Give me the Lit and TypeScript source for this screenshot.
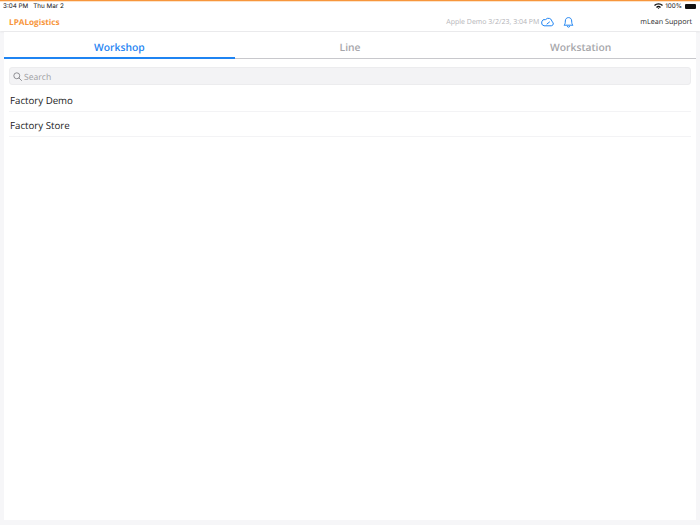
import { LitElement, html, css } from "lit";
import { customElement, state } from "lit/decorators.js";

@customElement("app-root")
export class AppRoot extends LitElement {
  @state() active = "Workshop";
  static styles = css`
    :host { display: flex; flex-direction: column; width: 700px; height: 525px; overflow: hidden; background: #f6f6f8; font-family: "Open Sans", sans-serif; color: #1c1c1e; text-rendering: geometricPrecision; }
    .top { background: linear-gradient(#fde3c8 1px, #fff 1px); border-top: 1px solid #f7963c; box-shadow: 0 1px 2px rgba(0,0,0,.07); height: 31px; box-sizing: border-box; flex: none; display: flex; flex-direction: column; }
    .status { height: 9px; display: flex; align-items: center; padding: 1px 3px 0; font: 6.3px "Inter", sans-serif; color: #111; justify-content: space-between; box-sizing: border-box; }
    .status .l { display: flex; gap: 5px; }
    .status .r { display: flex; align-items: center; gap: 2px; }
    .batt { width: 11px; height: 5px; background: #111; border-radius: 1px; margin-left: 1px; margin-right: 1px; }
    .bar { flex: 1; display: flex; align-items: center; padding: 3px 8px 0 9px; }
    .logo { color: #f7963c; font-weight: 700; font-size: 8.2px; }
    .sp { flex: 1; }
    .sync { color: #b4b4b8; font-size: 7px; margin-right: 2px; }
    .cloud { width: 13px; height: 10px; display: block; margin-right: 9px; }
    .bell { width: 11px; height: 12px; display: block; margin-right: 66px; }
    .user { font-size: 7.2px; color: #2a2a2c; }
    .panel { flex: 1; background: #fff; margin: 1px 4px 5px; display: flex; flex-direction: column; }
    .tabs { display: flex; height: 27px; box-sizing: border-box; flex: none; border-bottom: 1px solid #c8c8cc; }
    .tab { flex: 1; display: flex; align-items: center; justify-content: center; font-size: 10.3px; font-weight: 600; color: #a6a6aa; padding-top: 4px; box-sizing: border-box; height: 27px; }
    .tab.on { color: #1f84f2; border-bottom: 2px solid #1f84f2; padding-top: 6px; }
    .content { padding: 8px 5px 0 5px; }
    .search { height: 18px; background: #f3f3f5; border: 1px solid #ececee; border-radius: 3px; display: flex; align-items: center; padding: 1px 0 0 3px; gap: 2px; color: #9d9da2; font-size: 8.6px; box-sizing: border-box; }
    .search svg { width: 9px; height: 9px; display: block; }
    .row { height: 25px; display: flex; align-items: center; border-bottom: 1px solid #f3f3f5; box-sizing: border-box; padding: 2px 0 0 1px; font-size: 9.7px; color: #222224; }
    .rows { margin-top: 2px; }
  `;
  render() {
    return html`
      <div class="top">
        <div class="status">
          <div class="l"><span>3:04 PM</span><span>Thu Mar 2</span></div>
          <div class="r">
            <svg width="9" height="6" viewBox="0 0 9 6"><path d="M0 2 A6.5 6.5 0 0 1 9 2 L8 3 A5 5 0 0 0 1 3 Z M2 4 A3.5 3.5 0 0 1 7 4 L6 5 A2 2 0 0 0 3 5 Z M3.7 5.3 A1.2 1.2 0 0 1 5.3 5.3 L4.5 6 Z" fill="#111"/></svg>
            <span>100%</span><span class="batt"></span>
          </div>
        </div>
        <div class="bar">
          <span class="logo">LPALogistics</span>
          <span class="sp"></span>
          <span class="sync">Apple Demo 3/2/23, 3:04 PM</span>
          <svg class="cloud" viewBox="0 0 13 10" fill="none" stroke="#1f84f2" stroke-width="1"><path d="M3 8.8 H10.3 A2.2 2.2 0 0 0 11 4.6 A3.6 3.6 0 0 0 4.6 2.6 A2.9 2.9 0 0 0 3 8.8 Z"/><path d="M6 7 L8.5 5" stroke-linecap="round"/></svg>
          <svg class="bell" viewBox="0 0 11 12" fill="none" stroke="#1f84f2" stroke-width="1" stroke-linejoin="round"><path d="M1 9.2 C2.2 8 2.3 7 2.3 5 C2.3 3 3.6 1.6 5.5 1.6 C7.4 1.6 8.7 3 8.7 5 C8.7 7 8.8 8 10 9.2 Z"/><path d="M4.3 10.4 A1.3 1.3 0 0 0 6.7 10.4" stroke-linecap="round"/></svg>
          <span class="user">mLean Support</span>
        </div>
      </div>
      <div class="panel">
        <div class="tabs">
          ${["Workshop", "Line", "Workstation"].map(t => html`<div class="tab ${t === this.active ? "on" : ""}">${t}</div>`)}
        </div>
        <div class="content">
          <div class="search">
            <svg viewBox="0 0 10 10" fill="none" stroke="#85858a" stroke-width="1"><circle cx="4.2" cy="4.2" r="3.3"/><path d="M6.7 6.7 L9.5 9.5" stroke-linecap="round"/></svg>
            <span>Search</span>
          </div>
          <div class="rows">
            <div class="row">Factory Demo</div>
            <div class="row">Factory Store</div>
          </div>
        </div>
      </div>
    `;
  }
}
